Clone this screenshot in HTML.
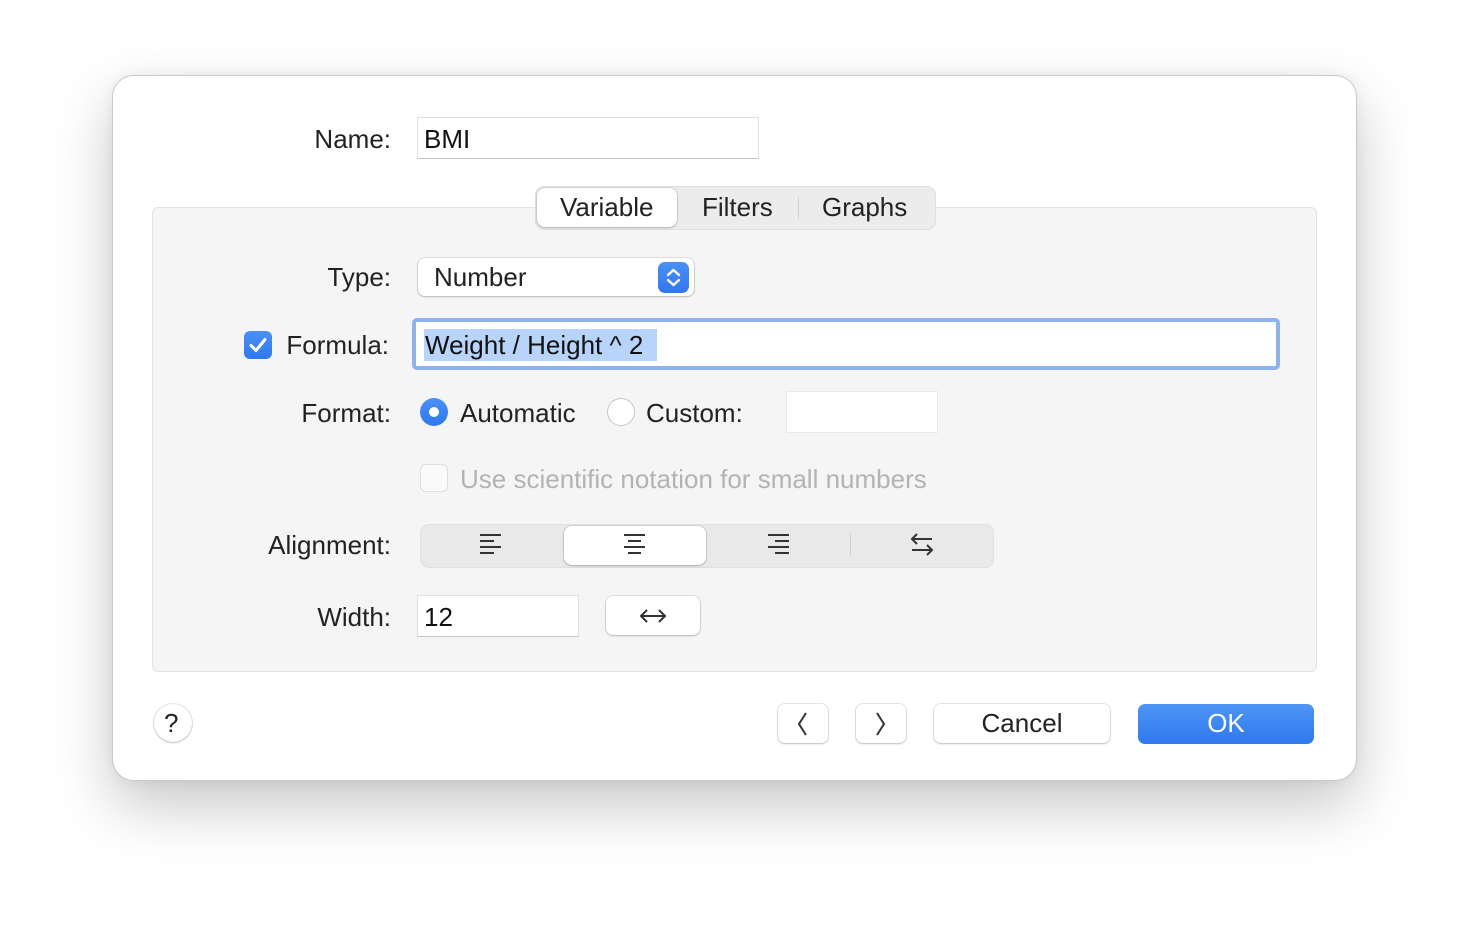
<!DOCTYPE html>
<html><head><style>
body{margin:0;width:1468px;height:928px;background:#fff;font-family:"Liberation Sans",sans-serif;color:#222;position:relative;overflow:hidden}
.a{position:absolute}
.win{left:112px;top:75px;width:1243px;height:704px;border-radius:22px;background:#fff;border:1px solid #c9c9c9;box-shadow:0 25px 60px rgba(0,0,0,.22),0 0 12px rgba(0,0,0,.06)}
.lbl{font-size:26px;text-align:right;width:300px;left:91px;line-height:30px}
.t{font-size:26px;line-height:30px}
.field{background:#fff;border:1px solid #e0e0e0;border-bottom-color:#c4c4c4}
.btn{background:#fff;border-radius:7px;box-shadow:0 0 0 1px rgba(0,0,0,.09),0 1px 2px rgba(0,0,0,.18)}
</style></head><body>
<div class="a win"></div>
<div class="a" style="left:152px;top:207px;width:1163px;height:463px;background:#f5f5f5;border:1px solid #e3e3e3;border-radius:6px"></div>

<div class="a lbl" style="top:124px">Name:</div>
<div class="a field" style="left:417px;top:117px;width:340px;height:40px"></div>
<div class="a t" style="left:424px;top:124px;color:#111">BMI</div>

<div class="a" style="left:535px;top:186px;width:399px;height:42px;background:#ececec;border-radius:9px;border:1px solid #e0e0e0"></div>
<div class="a btn" style="left:537px;top:188px;width:140px;height:39px;border-radius:8px"></div>
<div class="a" style="left:798px;top:197px;width:1px;height:22px;background:#d0d0d0"></div>
<div class="a t" style="left:560px;top:192px">Variable</div>
<div class="a t" style="left:702px;top:192px">Filters</div>
<div class="a t" style="left:822px;top:192px">Graphs</div>

<div class="a lbl" style="top:262px">Type:</div>
<div class="a btn" style="left:418px;top:258px;width:276px;height:38px"></div>
<div class="a t" style="left:434px;top:262px">Number</div>
<div class="a" style="left:658px;top:262px;width:31px;height:31px;border-radius:7px;background:linear-gradient(#4a90f5,#2f78ee)"><svg width="31" height="31"><path d="M10 13l5.5-5 5.5 5M10 18l5.5 5 5.5-5" fill="none" stroke="#fff" stroke-width="2.4" stroke-linecap="round" stroke-linejoin="round"/></svg></div>

<div class="a" style="left:244px;top:331px;width:28px;height:28px;border-radius:6px;background:linear-gradient(#4a90f5,#2f78ee)"><svg width="28" height="28"><path d="M7 14.5l5 5 9-11" fill="none" stroke="#fff" stroke-width="3" stroke-linecap="round" stroke-linejoin="round"/></svg></div>
<div class="a lbl" style="top:330px;left:89px">Formula:</div>
<div class="a" style="left:412px;top:318px;width:860px;height:44px;border:4px solid #8eb1ef;border-radius:5px;background:#fff"></div>
<div class="a" style="left:424px;top:329px;width:233px;height:32px;background:#b8d4fb"></div>
<div class="a t" style="left:425px;top:330px;color:#111">Weight / Height ^ 2</div>

<div class="a lbl" style="top:398px">Format:</div>
<div class="a" style="left:420px;top:398px;width:28px;height:28px;border-radius:50%;background:linear-gradient(#4a90f5,#2f78ee)"><div class="a" style="left:9px;top:9px;width:10px;height:10px;border-radius:50%;background:#fff"></div></div>
<div class="a t" style="left:460px;top:398px">Automatic</div>
<div class="a" style="left:607px;top:398px;width:26px;height:26px;border-radius:50%;background:#fff;border:1px solid #c8c8c8"></div>
<div class="a t" style="left:646px;top:398px">Custom:</div>
<div class="a field" style="left:786px;top:391px;width:150px;height:40px;border-color:#e8e8e8"></div>

<div class="a" style="left:420px;top:464px;width:26px;height:26px;border-radius:6px;background:#fafafa;border:1px solid #dedede"></div>
<div class="a t" style="left:460px;top:464px;color:#b3b3b3">Use scientific notation for small numbers</div>

<div class="a lbl" style="top:530px">Alignment:</div>
<div class="a" style="left:420px;top:524px;width:572px;height:42px;background:#e9e9e9;border-radius:9px;border:1px solid #e0e0e0"></div>
<div class="a btn" style="left:564px;top:526px;width:142px;height:39px;border-radius:8px"></div>
<div class="a" style="left:850px;top:534px;width:1px;height:22px;background:#d0d0d0"></div>
<svg class="a" style="left:470px;top:530px" width="480" height="30"><g stroke="#333" stroke-width="2" fill="none"><path d="M10 5h21M10 11h14M10 17h21M10 23h14"/><path d="M154 5h21M158 11h13M154 17h21M158 23h13"/><path d="M298 5h21M305 11h14M298 17h21M305 23h14"/><path d="M462 9h-20M447 4l-5 5 5 5M442 20h20M457 15l5 5-5 5"/></g></svg>

<div class="a lbl" style="top:602px">Width:</div>
<div class="a field" style="left:417px;top:595px;width:160px;height:40px"></div>
<div class="a t" style="left:424px;top:602px;color:#111">12</div>
<div class="a btn" style="left:606px;top:596px;width:94px;height:39px"></div>
<svg class="a" style="left:638px;top:604px" width="30" height="24"><path d="M3 12h24M9 6l-6 6 6 6M21 6l6 6-6 6" fill="none" stroke="#333" stroke-width="2"/></svg>

<div class="a btn" style="left:154px;top:704px;width:38px;height:38px;border-radius:50%"></div>
<div class="a t" style="left:164px;top:708px;font-size:26px">?</div>
<div class="a btn" style="left:778px;top:704px;width:50px;height:39px"></div>
<svg class="a" style="left:790px;top:710px" width="26" height="28"><path d="M16 3l-7 11 7 11" fill="none" stroke="#333" stroke-width="2"/></svg>
<div class="a btn" style="left:856px;top:704px;width:50px;height:39px"></div>
<svg class="a" style="left:868px;top:710px" width="26" height="28"><path d="M9 3l7 11-7 11" fill="none" stroke="#333" stroke-width="2"/></svg>
<div class="a btn" style="left:934px;top:704px;width:176px;height:39px"></div>
<div class="a t" style="left:934px;top:708px;width:176px;text-align:center">Cancel</div>
<div class="a" style="left:1138px;top:704px;width:176px;height:40px;border-radius:7px;background:linear-gradient(#4e95f6,#2f78ee)"></div>
<div class="a t" style="left:1138px;top:708px;width:176px;text-align:center;color:#fff">OK</div>
</body></html>
